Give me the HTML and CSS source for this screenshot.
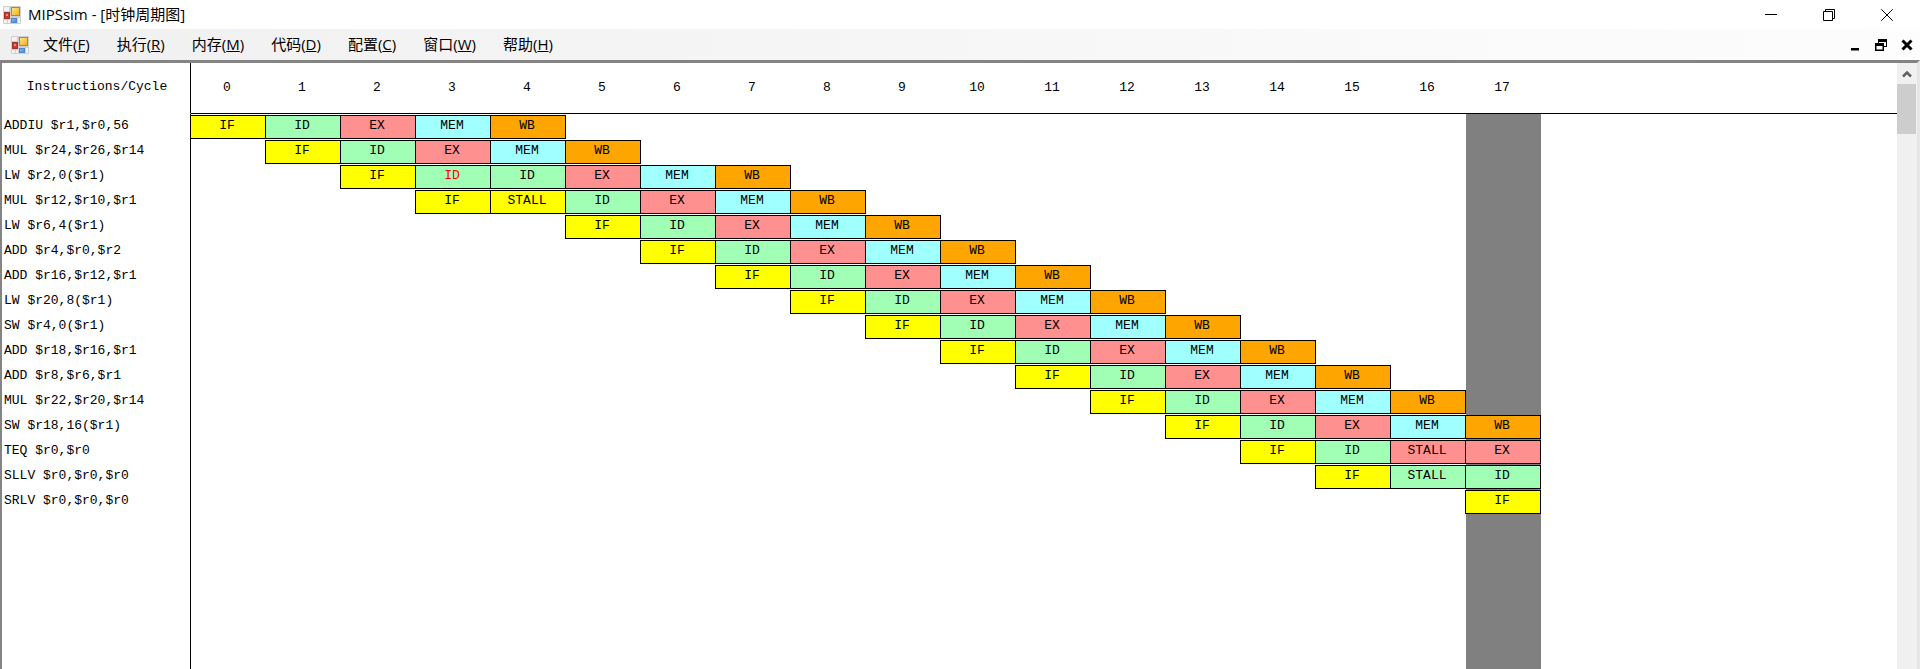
FILE: index.html
```html
<!DOCTYPE html>
<html lang="zh-CN">
<head>
<meta charset="utf-8">
<title>MIPSsim - [时钟周期图]</title>
<link rel="stylesheet" href="styles.css">
</head>
<body>
<svg class="defs" width="0" height="0" aria-hidden="true">
  <defs>
    <linearGradient id="gold" x1="0" y1="0" x2="1" y2="1"><stop offset="0" stop-color="#ffe690"/><stop offset="1" stop-color="#efb010"/></linearGradient>
    <linearGradient id="blue" x1="0" y1="0" x2="1" y2="1"><stop offset="0" stop-color="#8fc0ff"/><stop offset="1" stop-color="#3a7fe0"/></linearGradient>
    <symbol id="app" viewBox="0 0 18 18">
      <rect width="18" height="18" rx="1" fill="#cfcfcf"/>
      <rect x="1" y="1" width="5" height="4" fill="#f4f4f4"/>
      <rect x="1" y="14" width="3" height="3" fill="#f4f4f4"/>
      <rect x="5" y="14" width="2" height="3" fill="#f4f4f4"/>
      <rect x="1.5" y="6.5" width="5" height="6" fill="#c83a30" stroke="#a4342c"/>
      <rect x="3" y="8" width="2" height="2" fill="#f08878"/>
      <rect x="8.5" y="1.5" width="8" height="8" fill="url(#gold)" stroke="#b98a14"/>
      <rect x="8.5" y="12.5" width="5" height="4" fill="url(#blue)" stroke="#4f86d0"/>
      <rect x="15" y="12" width="2" height="5" fill="#f4f4f4"/>
    </symbol>
  </defs>
</svg>
<header class="titlebar">
  <svg class="app-icon" aria-hidden="true"><use href="#app"/></svg>
  <h1 class="title">MIPSsim - [时钟周期图]</h1>
  <div class="window-buttons">
    <button type="button" aria-label="最小化"><svg width="12" height="12" viewBox="0 0 12 12"><path d="M0 5.5H12" stroke="#000"/></svg></button>
    <button type="button" aria-label="还原"><svg width="12" height="12" viewBox="0 0 12 12" fill="none" stroke="#000"><path d="M.5 2.5H9.5V11.5H.5zM2.5 2.500V.5H11.5V9.5H9.5"/></svg></button>
    <button type="button" aria-label="关闭"><svg width="12" height="12" viewBox="0 0 12 12"><path d="M.3.3 11.7 11.7M11.7.3.3 11.7" stroke="#000"/></svg></button>
  </div>
</header>
<nav class="menubar">
  <svg class="app-icon" aria-hidden="true"><use href="#app"/></svg>
  <div class="menus">
    <button type="button">文件(<u>F</u>)</button>
    <button type="button">执行(<u>R</u>)</button>
    <button type="button">内存(<u>M</u>)</button>
    <button type="button">代码(<u>D</u>)</button>
    <button type="button">配置(<u>C</u>)</button>
    <button type="button">窗口(<u>W</u>)</button>
    <button type="button">帮助(<u>H</u>)</button>
  </div>
  <div class="child-buttons">
    <button type="button" aria-label="最小化子窗口"><svg width="12" height="12" viewBox="0 0 12 12"><path d="M2 9H10V11.5H2z"/></svg></button>
    <button type="button" aria-label="还原子窗口"><svg width="12" height="12" viewBox="0 0 12 12"><path d="M3 0H12V8H9V7H11V3H4V4H3zM0 4H9V12H0zM1.5 7V10.5H7.5V7z" fill-rule="evenodd"/></svg></button>
    <button type="button" aria-label="关闭子窗口"><svg width="12" height="12" viewBox="0 0 12 12"><path d="M1.5 1.5 10.5 10.5M10.5 1.5 1.5 10.5" stroke="#000" stroke-width="3"/></svg></button>
  </div>
</nav>
<main class="view">
  <div class="sheet">
    <table class="cycles">
      <colgroup><col class="col-name"><col class="col-cycle" span="18"><col></colgroup>
      <thead>
        <tr><th class="name" scope="col">Instructions/Cycle</th><th scope="col">0</th><th scope="col">1</th><th scope="col">2</th><th scope="col">3</th><th scope="col">4</th><th scope="col">5</th><th scope="col">6</th><th scope="col">7</th><th scope="col">8</th><th scope="col">9</th><th scope="col">10</th><th scope="col">11</th><th scope="col">12</th><th scope="col">13</th><th scope="col">14</th><th scope="col">15</th><th scope="col">16</th><th scope="col">17</th><td></td></tr>
      </thead>
      <tbody>
        <tr><th class="name" scope="row">ADDIU $r1,$r0,56</th><td><div class="stage if">IF</div></td><td><div class="stage id">ID</div></td><td><div class="stage ex">EX</div></td><td><div class="stage mem">MEM</div></td><td><div class="stage wb">WB</div></td><td colspan="12"></td><td class="now"></td><td></td></tr>
        <tr><th class="name" scope="row">MUL $r24,$r26,$r14</th><td></td><td><div class="stage if">IF</div></td><td><div class="stage id">ID</div></td><td><div class="stage ex">EX</div></td><td><div class="stage mem">MEM</div></td><td><div class="stage wb">WB</div></td><td colspan="11"></td><td class="now"></td><td></td></tr>
        <tr><th class="name" scope="row">LW $r2,0($r1)</th><td colspan="2"></td><td><div class="stage if">IF</div></td><td><div class="stage id hazard">ID</div></td><td><div class="stage id">ID</div></td><td><div class="stage ex">EX</div></td><td><div class="stage mem">MEM</div></td><td><div class="stage wb">WB</div></td><td colspan="9"></td><td class="now"></td><td></td></tr>
        <tr><th class="name" scope="row">MUL $r12,$r10,$r1</th><td colspan="3"></td><td><div class="stage if">IF</div></td><td><div class="stage if">STALL</div></td><td><div class="stage id">ID</div></td><td><div class="stage ex">EX</div></td><td><div class="stage mem">MEM</div></td><td><div class="stage wb">WB</div></td><td colspan="8"></td><td class="now"></td><td></td></tr>
        <tr><th class="name" scope="row">LW $r6,4($r1)</th><td colspan="5"></td><td><div class="stage if">IF</div></td><td><div class="stage id">ID</div></td><td><div class="stage ex">EX</div></td><td><div class="stage mem">MEM</div></td><td><div class="stage wb">WB</div></td><td colspan="7"></td><td class="now"></td><td></td></tr>
        <tr><th class="name" scope="row">ADD $r4,$r0,$r2</th><td colspan="6"></td><td><div class="stage if">IF</div></td><td><div class="stage id">ID</div></td><td><div class="stage ex">EX</div></td><td><div class="stage mem">MEM</div></td><td><div class="stage wb">WB</div></td><td colspan="6"></td><td class="now"></td><td></td></tr>
        <tr><th class="name" scope="row">ADD $r16,$r12,$r1</th><td colspan="7"></td><td><div class="stage if">IF</div></td><td><div class="stage id">ID</div></td><td><div class="stage ex">EX</div></td><td><div class="stage mem">MEM</div></td><td><div class="stage wb">WB</div></td><td colspan="5"></td><td class="now"></td><td></td></tr>
        <tr><th class="name" scope="row">LW $r20,8($r1)</th><td colspan="8"></td><td><div class="stage if">IF</div></td><td><div class="stage id">ID</div></td><td><div class="stage ex">EX</div></td><td><div class="stage mem">MEM</div></td><td><div class="stage wb">WB</div></td><td colspan="4"></td><td class="now"></td><td></td></tr>
        <tr><th class="name" scope="row">SW $r4,0($r1)</th><td colspan="9"></td><td><div class="stage if">IF</div></td><td><div class="stage id">ID</div></td><td><div class="stage ex">EX</div></td><td><div class="stage mem">MEM</div></td><td><div class="stage wb">WB</div></td><td colspan="3"></td><td class="now"></td><td></td></tr>
        <tr><th class="name" scope="row">ADD $r18,$r16,$r1</th><td colspan="10"></td><td><div class="stage if">IF</div></td><td><div class="stage id">ID</div></td><td><div class="stage ex">EX</div></td><td><div class="stage mem">MEM</div></td><td><div class="stage wb">WB</div></td><td colspan="2"></td><td class="now"></td><td></td></tr>
        <tr><th class="name" scope="row">ADD $r8,$r6,$r1</th><td colspan="11"></td><td><div class="stage if">IF</div></td><td><div class="stage id">ID</div></td><td><div class="stage ex">EX</div></td><td><div class="stage mem">MEM</div></td><td><div class="stage wb">WB</div></td><td></td><td class="now"></td><td></td></tr>
        <tr><th class="name" scope="row">MUL $r22,$r20,$r14</th><td colspan="12"></td><td><div class="stage if">IF</div></td><td><div class="stage id">ID</div></td><td><div class="stage ex">EX</div></td><td><div class="stage mem">MEM</div></td><td><div class="stage wb">WB</div></td><td class="now"></td><td></td></tr>
        <tr><th class="name" scope="row">SW $r18,16($r1)</th><td colspan="13"></td><td><div class="stage if">IF</div></td><td><div class="stage id">ID</div></td><td><div class="stage ex">EX</div></td><td><div class="stage mem">MEM</div></td><td class="now"><div class="stage wb">WB</div></td><td></td></tr>
        <tr><th class="name" scope="row">TEQ $r0,$r0</th><td colspan="14"></td><td><div class="stage if">IF</div></td><td><div class="stage id">ID</div></td><td><div class="stage ex">STALL</div></td><td class="now"><div class="stage ex">EX</div></td><td></td></tr>
        <tr><th class="name" scope="row">SLLV $r0,$r0,$r0</th><td colspan="15"></td><td><div class="stage if">IF</div></td><td><div class="stage id">STALL</div></td><td class="now"><div class="stage id">ID</div></td><td></td></tr>
        <tr><th class="name" scope="row">SRLV $r0,$r0,$r0</th><td colspan="17"></td><td class="now"><div class="stage if">IF</div></td><td></td></tr>
        <tr class="rest"><td class="name"></td><td colspan="17"></td><td class="now"></td><td></td></tr>
      </tbody>
    </table>
  </div>
  <div class="scrollbar">
    <button type="button" aria-label="向上滚动"><svg width="10" height="8" viewBox="0 0 10 8"><path d="M1 6.5 5 2.5 9 6.5" fill="none" stroke="#606060" stroke-width="2.5"/></svg></button>
    <div class="thumb"></div>
  </div>
</main>
</body>
</html>
```

FILE: styles.css
```css
* { box-sizing: border-box; }

body {
  margin: 0;
  height: 100vh;
  display: flex;
  flex-direction: column;
  overflow: hidden;
  background: #fff;
  color: #000;
  font-family: "Open Sans", "Noto Sans CJK SC", sans-serif;
  font-size: 15px;
}

button {
  padding: 0;
  border: 0;
  background: none;
  color: inherit;
  font: inherit;
}

svg { display: block; }
.defs { position: absolute; }

.app-icon {
  flex: none;
  width: 18px;
  height: 18px;
}

.titlebar {
  flex: none;
  display: flex;
  align-items: center;
  height: 29px;
  padding: 0 27px 0 3px;
}

.title {
  margin: 0 auto 0 7px;
  font-size: 15px;
  font-weight: 400;
  line-height: 29px;
}

.window-buttons { display: flex; gap: 46px; }

.menubar {
  flex: none;
  display: flex;
  align-items: center;
  height: 31px;
  padding: 0 7px 0 11px;
  background: linear-gradient(to right, #f0f0f0, #fdfdfd);
}

.menus {
  display: flex;
  gap: 27px;
  margin: 0 auto 0 14px;
  line-height: 31px;
}

.child-buttons { display: flex; gap: 14px; }

.view {
  flex: 1;
  min-height: 0;
  display: flex;
  border-top: 3px solid #848484;
  border-left: 2px solid #848484;
  border-right: 3px solid #e6e6e6;
}

.sheet {
  flex: 1;
  min-width: 0;
  overflow: hidden;
}

.cycles {
  width: 100%;
  height: 100%;
  table-layout: fixed;
  border-collapse: separate;
  border-spacing: 0;
  font-family: "Liberation Mono", monospace;
  font-size: 13px;
}

.col-name { width: 189px; }
.col-cycle { width: 75px; }

.cycles th,
.cycles td {
  height: 25px;
  padding: 0;
  font-weight: 400;
}

.cycles thead th,
.cycles thead td {
  height: 51px;
  padding: 0 3px 2px 0;
  border-bottom: 1px solid #000;
}

.cycles .name {
  padding: 0 0 3px 2px;
  border-right: 1px solid #000;
  text-align: left;
  white-space: nowrap;
}

.cycles thead .name {
  border-bottom-color: transparent;
  text-align: center;
}

.cycles .rest td { height: auto; }
.cycles .now { background: #808080; }

.stage {
  height: 24px;
  margin: 1px 0 0 -1px;
  padding-right: 2px;
  border: 1px solid #000;
  line-height: 20px;
  text-align: center;
}

.if { background: #ffff00; }
.id { background: #a0ffb4; }
.ex { background: #ff9090; }
.mem { background: #a0ffff; }
.wb { background: #ffa500; }
.hazard { color: #ff0000; }

.scrollbar {
  flex: none;
  width: 20px;
  padding-right: 1px;
  background: #f0f0f0;
}

.scrollbar button {
  display: grid;
  place-items: center;
  width: 100%;
  height: 21px;
}

.thumb {
  height: 50px;
  background: #cdcdcd;
}
```
